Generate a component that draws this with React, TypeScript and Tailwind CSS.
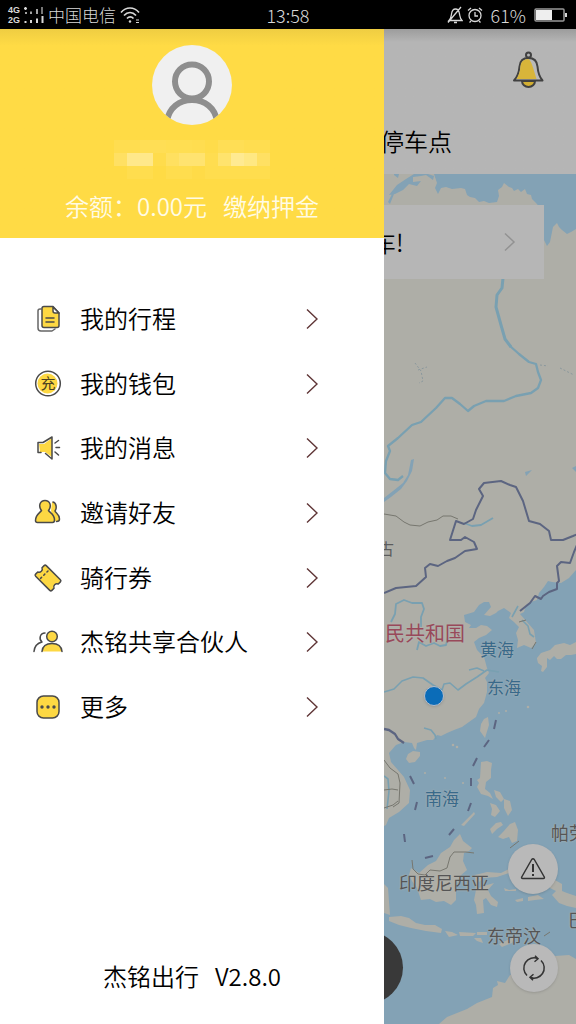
import React from "react";

type IconProps = { children: React.ReactNode };

const MenuIcon: React.FC<IconProps> = ({ children }) => (
  <svg
    viewBox="0 0 32 32"
    className="h-8 w-8 shrink-0"
    fill="none"
    stroke="#4a4a4a"
    strokeWidth="1.5"
    strokeLinecap="round"
    strokeLinejoin="round"
    aria-hidden="true"
  >
    {children}
  </svg>
);

const TripIcon = () => (
  <MenuIcon>
    <path d="M9 6H8a2 2 0 0 0-2 2v17a3 3 0 0 0 3 3h11l3-2" stroke="#666" />
    <path d="M12 3.500h9l6 6.500v12.500a2 2 0 0 1-2 2H12a2 2 0 0 1-2-2v-17a2 2 0 0 1 2-2z" fill="#fdd843" />
    <path d="M21 4l6 6h-4a2 2 0 0 1-2-2z" fill="#fff" />
    <path d="M14 15h8M14 19h8" />
  </MenuIcon>
);

const WalletIcon = () => (
  <MenuIcon>
    <circle cx="16" cy="15.500" r="12.300" fill="#fff" />
    <circle cx="15.500" cy="15.500" r="10" fill="#fdd843" stroke="none" />
    <text
      x="16"
      y="21"
      textAnchor="middle"
      fontSize="15"
      fontFamily="'Noto Sans CJK SC', sans-serif"
      fill="#4a4020"
      stroke="none"
    >
      充
    </text>
  </MenuIcon>
);

const MessageIcon = () => (
  <MenuIcon>
    <path d="M7 12h5l8-6v19l-7-5H8z" fill="#fdd843" stroke="none" />
    <path d="M9 20.500H6v-10h5l9-5.500v22l-6.500-5.500" />
    <path d="M23 11l3.500-2.500M24 15.500h3.500M23 20l3.500 3" />
  </MenuIcon>
);

const InviteIcon = () => (
  <MenuIcon>
    <path d="M20 5c4 0 5 5 3 9 1 2 5 4 4 10h-4L19 14z" fill="#fdd843" stroke="none" />
    <path d="M21 5c3.500 1 4 6 2 9 .5 2 4.500 3 4.500 8 0 2-1 2.500-3 2.500" />
    <path
      d="M9.500 13.500C6 9 8 3.500 13 3.500s7 5.500 3.500 10c1.500 2.500 6 3.500 6 9.500 0 2-.5 2.500-2 2.500h-15c-1.500 0-2-.5-2-2 0-6 4.500-7.500 6-10z"
      fill="#fdd843"
    />
  </MenuIcon>
);

const CouponIcon = () => (
  <MenuIcon>
    <g transform="rotate(45 16 16)">
      <path
        d="M6 8.500h20a1.500 1.500 0 0 1 1.500 1.500v3a3.200 3.200 0 0 0 0 6v3a1.500 1.500 0 0 1-1.500 1.500H6A1.500 1.500 0 0 1 4.500 22v-3a3.200 3.200 0 0 0 0-6v-3A1.500 1.500 0 0 1 6 8.500z"
        fill="#fdd843"
      />
      <path d="M11 11v1.500M11 15.500v1.500M11 20v1.500" />
    </g>
  </MenuIcon>
);

const PartnerIcon = () => (
  <MenuIcon>
    <path d="M13 7c-5 0-6.500 6-3 9-4 1-7.500 4-8 9.500" />
    <path d="M10 25.500c.5-5 4-8 10-8s9.500 3 10 8z" fill="#fdd843" stroke="none" />
    <path d="M10 25.500c.5-5 4-8 10-8s9.500 3 10 8" />
    <circle cx="20" cy="10.500" r="5.300" fill="#fdd843" />
  </MenuIcon>
);

const MoreIcon = () => (
  <MenuIcon>
    <rect x="5" y="5" width="22" height="22" rx="6.500" fill="#fdd843" />
    <g fill="#4a4a4a" stroke="none">
      <circle cx="10" cy="16" r="1.700" />
      <circle cx="16" cy="16" r="1.700" />
      <circle cx="22" cy="16" r="1.700" />
    </g>
  </MenuIcon>
);

const menuItems = [
  { label: "我的行程", icon: TripIcon },
  { label: "我的钱包", icon: WalletIcon },
  { label: "我的消息", icon: MessageIcon },
  { label: "邀请好友", icon: InviteIcon },
  { label: "骑行券", icon: CouponIcon },
  { label: "杰铭共享合伙人", icon: PartnerIcon },
  { label: "更多", icon: MoreIcon },
];

// Blocks that hide the phone number, row by row
const maskCells = [
  "bg-[#ffdd50]", "bg-[#ffdd50]", "bg-[#ffde55]", "bg-[#ffde55]", "bg-[#ffde52]", "bg-[#ffde52]",
  "bg-[#ffdd50]", "bg-[#ffdc4a]", "bg-[#ffde55]", "bg-[#ffde55]", "bg-[#ffdd50]", "bg-[#ffdd50]",
  "bg-[#ffe063]", "bg-[#ffe88a]", "bg-[#ffe88a]", "bg-[#ffdc4c]", "bg-[#ffe060]", "bg-[#ffe370]",
  "bg-[#ffe370]", "bg-[#ffdd50]", "bg-[#ffe36d]", "bg-[#ffea92]", "bg-[#ffe883]", "bg-[#ffe063]",
  "bg-[#ffdb45]", "bg-[#ffdd4e]", "bg-[#ffdd4e]", "bg-[#ffdb45]", "bg-[#ffdd4e]", "bg-[#ffdd4e]",
  "bg-[#ffdb48]", "bg-[#ffdd4e]", "bg-[#ffdd4e]", "bg-[#ffdd4e]", "bg-[#ffdd4e]", "bg-[#ffdd4e]",
];

const mapLabels = [
  { text: "古", style: "left-[-6px] top-[361px] text-base text-[#5c5c5c]" },
  { text: "民共和国", style: "left-[1px] top-[446px] text-xl text-[#98495a]" },
  { text: "黄海", style: "left-[96px] top-[462px] text-[17px] text-[#38698a]" },
  { text: "东海", style: "left-[103px] top-[500px] text-[17px] text-[#38698a]" },
  { text: "南海", style: "left-[41px] top-[611px] text-[17px] text-[#38698a]" },
  { text: "帕劳", style: "left-[167px] top-[645px] text-lg text-[#555]" },
  { text: "印度尼西亚", style: "left-[15px] top-[695px] text-lg text-[#555]" },
  { text: "巴", style: "left-[184px] top-[732px] text-lg text-[#555]" },
  { text: "东帝汶", style: "left-[103px] top-[748px] text-lg text-[#555]" },
];

const StatusBar = () => (
  <div className="grid h-[29px] shrink-0 grid-cols-3 items-center bg-black px-2 text-[#d8d8d8]">
    <div className="flex items-center">
      <div className="w-4 font-['Liberation_Sans',sans-serif] text-[9px] leading-[10px] font-bold">
        <div>4G</div>
        <div>2G</div>
      </div>
      <svg viewBox="0 0 20 18" className="mr-1 h-[18px] w-5" stroke="#d8d8d8" strokeWidth="2" fill="none" aria-hidden="true">
        <path d="M0 2.500h3M1.500 1v3M2 6v2M7 5.500v2.500M13 3v5" strokeWidth="1.500" />
        <path d="M18 1v7" stroke="#777" />
        <path d="M1.500 15v2M7 14v3M13 12.500v4.500M18.500 10v7" />
      </svg>
      <span className="text-[17px] font-light whitespace-nowrap">中国电信</span>
      <svg viewBox="0 0 22 18" className="ml-1 h-[18px] w-[22px]" stroke="#d8d8d8" strokeWidth="1.700" fill="none" aria-hidden="true">
        <path d="M1 6.500C6 .5 14 .5 19 6.500M4 9.500c3.500-4 8.500-4 12 0M7 12.500c2-2.200 4.500-2.200 6.500 0" />
        <circle cx="10" cy="15.500" r="1.200" fill="#d8d8d8" stroke="none" />
        <path d="M16 14h3M16 16.500h3" strokeWidth="1" />
      </svg>
    </div>
    <div className="text-center text-lg leading-6 font-light">13:58</div>
    <div className="flex items-center justify-end">
      <svg viewBox="0 0 16 18" className="mr-1 h-[18px] w-4 shrink-0" stroke="#d8d8d8" strokeWidth="1.300" fill="none" aria-hidden="true">
        <path d="M2 14.500h13c-2-2-2-4-2.500-6.500C12 4 10.500 3 8.500 3S5 4 4.500 8C4 11 4 12.500 2 14.500zM14 1L1 16.500M7 16.500h3" />
      </svg>
      <svg viewBox="0 0 16 18" className="mr-2 h-[18px] w-4 shrink-0" stroke="#d8d8d8" strokeWidth="1.300" fill="none" aria-hidden="true">
        <circle cx="8" cy="9.500" r="6" />
        <path d="M8 6v4h3M1 4.500L4 2M15 4.500L12 2M4 15l-1.500 1.500M12 15l1.500 1.500" />
      </svg>
      <span className="text-lg leading-6 font-light">61%</span>
      <svg viewBox="0 0 34 14" className="ml-2 h-[14px] w-[34px] shrink-0" aria-hidden="true">
        <rect x="1" y="1" width="29" height="12" rx="1" fill="none" stroke="#999" strokeWidth="1.500" />
        <rect x="2" y="2" width="16" height="10" fill="#eee" />
        <path d="M32 5v4" stroke="#d8d8d8" strokeWidth="2" />
      </svg>
    </div>
  </div>
);

const Drawer = () => (
  <aside className="flex w-2/3 shrink-0 flex-col bg-white">
    <div className="flex h-[209px] flex-col items-center bg-[#ffdb45] bg-linear-to-b from-[#efcd42] to-[#ffdb45] to-[8%] pt-4">
      <svg viewBox="0 0 80 80" className="h-20 w-20 rounded-full bg-[#f0f0f0]" fill="none" stroke="#8e8e8e" strokeWidth="6" role="img" aria-label="头像">
        <circle cx="40" cy="36.500" r="17" />
        <path d="M15 76c2-13 12-21 25-21s23 8 25 21" />
      </svg>
      <div className="mt-[15px] grid grid-cols-12">
        {maskCells.map((cell, i) => (
          <div key={i} className={`h-[13px] w-[13px] ${cell}`} />
        ))}
      </div>
      <div className="mt-[9px] flex gap-4 text-2xl leading-9 font-[350] whitespace-nowrap text-[#fffbe4]">
        <span>余额：0.00元</span>
        <button type="button">缴纳押金</button>
      </div>
    </div>

    <nav className="mt-[49px] grid h-[452px] auto-rows-fr">
      {menuItems.map(({ label, icon: Icon }) => (
        <button key={label} type="button" className="flex items-center gap-4 pr-[66px] pl-8 text-left">
          <Icon />
          <span className="flex-1 pb-0.5 text-2xl font-[350] whitespace-nowrap text-black">{label}</span>
          <svg viewBox="0 0 12 22" className="h-[22px] w-3" fill="none" stroke="#5f3536" strokeWidth="1.400" aria-hidden="true">
            <path d="M1 1.500L11 11L1 20.500" />
          </svg>
        </button>
      ))}
    </nav>

    <p className="mt-auto flex justify-center gap-4 pb-[30px] text-2xl leading-9 font-[350] text-black">
      <span>杰铭出行</span>
      <span>V2.8.0</span>
    </p>
  </aside>
);

const MapCanvas = () => (
  <svg
    viewBox="384 174 192 850"
    preserveAspectRatio="xMinYMin slice"
    className="absolute inset-0 h-full w-full"
    fill="none"
    strokeLinejoin="round"
    aria-hidden="true"
  >
    <g fill="#aeaea7">
      {/* Mainland */}
      <path d="M384 174H434L437 183L435 188L438 194L441 188L446 187L452 189L461 188L465 189L467 195L470 197L475 198L479 202L484 201L489 203L497 202L499 196L498 190L502 187L504 183L509 187L512 188L514 191L518 189L521 192L525 189L527 194L531 195L532 199L536 203L544 212L544 240L547 246L550 242L553 227L557 223L559 227L562 230L567 234L571 232L576 229V570L569 578L561 583L552 582L548 581L544 587L539 593L537 600L531 602L526 605L524 612L520 614L527 622L534 630L536 643L531 648L524 645L517 648L518 640L516 633L519 627L514 622L509 618L511 613L504 608L498 611L496 613L490 616L484 615L491 607L489 602L484 602L479 605L474 612L464 615L465 622L471 625L469 628L476 628L481 625L487 626L492 630L486 635L479 638L474 642L477 650L484 657L487 668L489 673L485 678L487 682L487 692L484 703L479 709L476 717L469 722L462 727L454 730L447 733L441 736L437 735L433 740L427 740L417 743L416 750L414 748L412 743L404 742L396 745L389 753L391 762L404 777L410 790L409 803L399 812L389 818L386 825L384 826z" />
      {/* Hainan, Taiwan */}
      <path d="M408 754l5-3 7 1 0 4-5 6-6 1-3-4zM484 719l4-2 1 8-4 13-5-7 1-7z" />
      {/* Japan */}
      <path d="M537 658l4-5 9-3 5-5 9-2 6 2 6-3v12l-5 1-5 0-5 4-4 0-3-3-4 4-3-2 0 9-4 5-2-1 1-5-4-3-1-4z" />
      {/* Philippines */}
      <path d="M481 762l6-1 5 2-1 7 0 8-5 4-1 7 5 4 3 6-5-3-7-2-4-7 2-4-2-3 3-2zM490 803l6 2 4 6-5 6-4-2 1-6zM494 790l6 2 4 7-3 3-5-5zM504 799l6 2 2 9-4 6-4-8zM490 829l6-6 5-1 2 3-6 4-5 5zM503 832l7-8 5-2 3 8-1 11-5 2-3-6-6 2-5-2zM461 825l13-13 1 2-11 12z" />
      {/* Borneo */}
      <path d="M411 868l8 5 9-8 8-4 5-8 9-6 4-7 6-6 3 7 9 7-3 3-5 2-1 8 4 9-7 6-4 10 0 14-5 5-7-4-8 1-6-3-9 1-4-12-5-7-3-6z" />
      {/* Sulawesi and the small islands */}
      <path d="M475 875l12-3 14 1 8-4v4l-12 4-14 1-5 5 1 5 8-3 7-2-6 7 3 6 7 6-1 5-6-2-5-7-3 2 1 13-7 1-1-9-2-5 2-10zM504 888l5 2 7-1v2l-11 0zM515 900l8-2 0 3-6 1zM528 897l10-2 6 4-9 1-7 1zM524 875l4 3 1 8-4-3z" />
      {/* Sumatra, Java */}
      <path d="M384 884l4 4 2 27-6-2zM389 917l12-1 8 2 7 5 9 2 10 0 7 4-1 4-15-2-15-3-12-3-10-4zM445 931l7 1 6 3-9 2zM459 932l17 1-3 3-13 0zM474 938l7 0 2 5-6-2zM477 932l10 0v3l-10 0zM499 944l15-7-2 6-10 4z" />
      {/* New Guinea, Australia */}
      <path d="M547 881l8-1 7 4 0 7 5 2 9 3v12l-9-2-8-3-7-8 4-4-6-3zM439 1024l8-7 20-8 10-6 15-6 1-9 5-3-1-4 8 2 5-8 8-4-2-8 9-6 14-4 16 3 14-1 7 4v67z" />
    </g>

    {/* Arctic inlets */}
    <g fill="#83a2b5">
      <path d="M394 174l5 0-1 4-4-3zM389 195l8-10 9-6 8-5h14l6 2-1 4-7-5-5 1-8 1 0 5 8-1-4 5-8-2-6 6-8 4zM388 202l4-8 2 0-4 10z" />
      <path d="M411 460l3-1-2 12-5 10-6 8-10 8-7 5v-4l9-7 10-8 5-8zM525 472l7-2-6 6z" />
      <path d="M572 468l4-2v6z" />
    </g>

    {/* Rivers */}
    <g stroke="#79a0b1" strokeWidth="1.800">
      <path d="M503 278l-1 10-5 7-1 12 5 18 4 14 6 8" strokeWidth="3" />
      <path d="M510 346l9 8 10 8 7 2 2 8 3 8-3 8-7 5-15 3-12 5h-18l-12 5-6 5-8-7-8-6-7 0-9 10-15 14-9 3-14 13-10 8 2 5-4 10-1 12 5 6 8 1 5-4" strokeWidth="2.300" />
      <path d="M464 523l8 3 9-1 12-7" />
      <path d="M391 622l4-8 1-10 8-4 8 3 10 0 2 6-3 8 0 10M417 650l2 -8 7 4 8-3 6 3 6-1 2-8" />
      <path d="M384 692l10-3 8-8 11-4 10 1 10 7 9 5 2-6 6-1 8 7 8-6 11-7 10-7 12 2M424 728l7 2 4 5 1 4M512 617l6-11M522 620l6 6 2 8 4 3M469 670l8-2 7 3M384 776l4 3 1 12-2 18" strokeWidth="1.600" />
    </g>

    {/* Borders */}
    <g stroke="#5c6581" strokeWidth="2">
      <path d="M384 593l12-5 20-2 10-9-1-9 5-4 8 2 9-5 8-3 10-7 12-2-3-7-9-5-4 3-11 0 6-19 8 3 9-5 3-9 7-14-4-7 5-6 17-2 9 4 6 2 7 14 6 20 11 3 9 7 2 9 12 0 10-4 7-3-3 12-3 7-4 11-9-1-4 4 2 15-2 2 0 6-8 3-6 4-2 3-6-3-5 7-10 8" />
      <path d="M384 729l5 1 6 4 3 5 6 4" strokeWidth="2.300" />
      <path d="M496 720l-2 9M489 740l-5 7M477 758l-4 8M471 778l0 8M471 803l-3 8M410 776l4 8M417 802l-2 8M454 829l-5 6M404 834l1 8M425 858l8-2" />
    </g>
    <g stroke="#77776f" strokeWidth="1">
      <path d="M384 514l12 2 8 6 6 3 10 1 8-4 9-2 6-4 8 0 7 3" />
      <path d="M384 760l6 8 8 6 2 9-1 20-6 4M384 790l8-1 6 1M384 808l9-3 5-4M412 860l1 9 5 5 7 1 5-5 10 1 7-3 3-11 4-5 12 0 8 1" />
      <path d="M519 622l7-2M536 642l-4 7M510 848l9-7M544 936l6-4" />
      <path d="M415 363l6 8 2 10-4 2M418 370l9-3M540 365l8 1M560 368l14 7" stroke="#8b989d" strokeDasharray="2 2" />
    </g>
    <g fill="#aeaea7">
      <circle cx="453" cy="745" r="1.300" />
      <circle cx="457" cy="747" r="1.300" />
      <circle cx="425" cy="773" r="1" />
      <circle cx="445" cy="778" r="1" />
      <circle cx="499" cy="713" r="1" />
      <circle cx="506" cy="711" r="1" />
      <circle cx="528" cy="707" r="1.300" />
      <circle cx="463" cy="783" r="1" />
    </g>
  </svg>
);

const HomeScreen = () => (
  <main className="flex min-w-0 flex-1 flex-col overflow-hidden bg-[#b5b5b5]">
    <header className="flex h-[145px] shrink-0 flex-col bg-linear-to-b from-[#9c9c9c] to-[#b5b5b5] to-[9%]">
      <button type="button" className="mt-[22px] mr-8 self-end" aria-label="通知">
        <svg viewBox="0 0 32 38" className="h-[38px] w-8" stroke="#414141" strokeWidth="2" strokeLinejoin="round" aria-hidden="true">
          <path d="M10 30a6.500 6 0 0 0 13 0z" fill="#d2ae32" />
          <path
            d="M2 29.500c4-4 5-8 5.500-14C8 10 11 7 16.500 7S25 10 25.500 15.500c.5 6 1.500 10 5 14z"
            fill="#b9b9b9"
          />
          <path d="M4.500 28c3-5 3.500-8 4-13 .5-4 3-7 8-7 3 2 5 10 8 20z" fill="#d8b53a" stroke="none" />
          <circle cx="16.500" cy="4" r="2.500" fill="#b5b5b5" />
        </svg>
      </button>
      <h1 className="mt-[34px] -ml-1 text-2xl leading-9 font-[350] text-black">停车点</h1>
    </header>

    <section className="relative flex-1 overflow-hidden bg-[#83a2b5]">
      <MapCanvas />

      <button
        type="button"
        className="relative mt-[31px] flex h-[74px] w-5/6 items-center justify-between bg-[#b6b6b6] pr-7 text-black"
      >
        <span className="-ml-3 text-2xl font-[350] whitespace-nowrap">车!</span>
        <svg viewBox="0 0 12 20" className="h-5 w-3" fill="none" stroke="#929292" strokeWidth="1.500" aria-hidden="true">
          <path d="M1 1.500L10 10L1 18.500" />
        </svg>
      </button>

      {mapLabels.map((label) => (
        <span
          key={label.text}
          className={`absolute leading-[26px] whitespace-nowrap text-shadow-[0_0_2px_#b8b8b2] ${label.style}`}
        >
          {label.text}
        </span>
      ))}

      {/* Current location */}
      <span className="absolute top-[512px] left-10 h-5 w-5 rounded-full border border-[#b4bcca] bg-[#0b6cb8] shadow" />

      <button
        type="button"
        aria-label="扫码"
        className="absolute bottom-5 -left-[54px] h-[73px] w-[73px] rounded-full bg-[#393939]"
      />
      <button
        type="button"
        aria-label="故障上报"
        className="absolute right-[18px] bottom-[130px] flex h-[50px] w-[50px] items-center justify-center rounded-full bg-[#b9b9b9] shadow"
      >
        <svg viewBox="0 0 26 24" className="h-6 w-[26px]" fill="none" stroke="#333" strokeWidth="1.500" strokeLinejoin="round" aria-hidden="true">
          <path d="M11.700 2.500q1.300-1.500 2.600 0l10 17.500q.5 1.500-1 1.500H2.700q-1.500 0-1-1.500z" />
          <path d="M13 7v8M13 17v2" strokeWidth="2" />
        </svg>
      </button>
      <button
        type="button"
        aria-label="刷新"
        className="absolute right-[18px] bottom-8 flex h-12 w-12 items-center justify-center rounded-full bg-[#b9b9b9] shadow"
      >
        <svg viewBox="0 0 24 26" className="h-[26px] w-6" fill="none" stroke="#333" strokeWidth="1.500" aria-hidden="true">
          <path d="M5 20.500A10.200 10.200 0 0 1 16 3.700M13 .8l3 2.900-3.500 3" />
          <path d="M19 5.500A10.200 10.200 0 0 1 8 22.300M11 25.200l-3-2.900 3.500-3" />
        </svg>
      </button>
    </section>
  </main>
);

const App: React.FC = () => {
  return (
    <div className="flex min-h-screen flex-col bg-white font-['Noto_Sans_CJK_SC',sans-serif]">
      <StatusBar />
      <div className="flex flex-1">
        <Drawer />
        <HomeScreen />
      </div>
    </div>
  );
};

export default App;
